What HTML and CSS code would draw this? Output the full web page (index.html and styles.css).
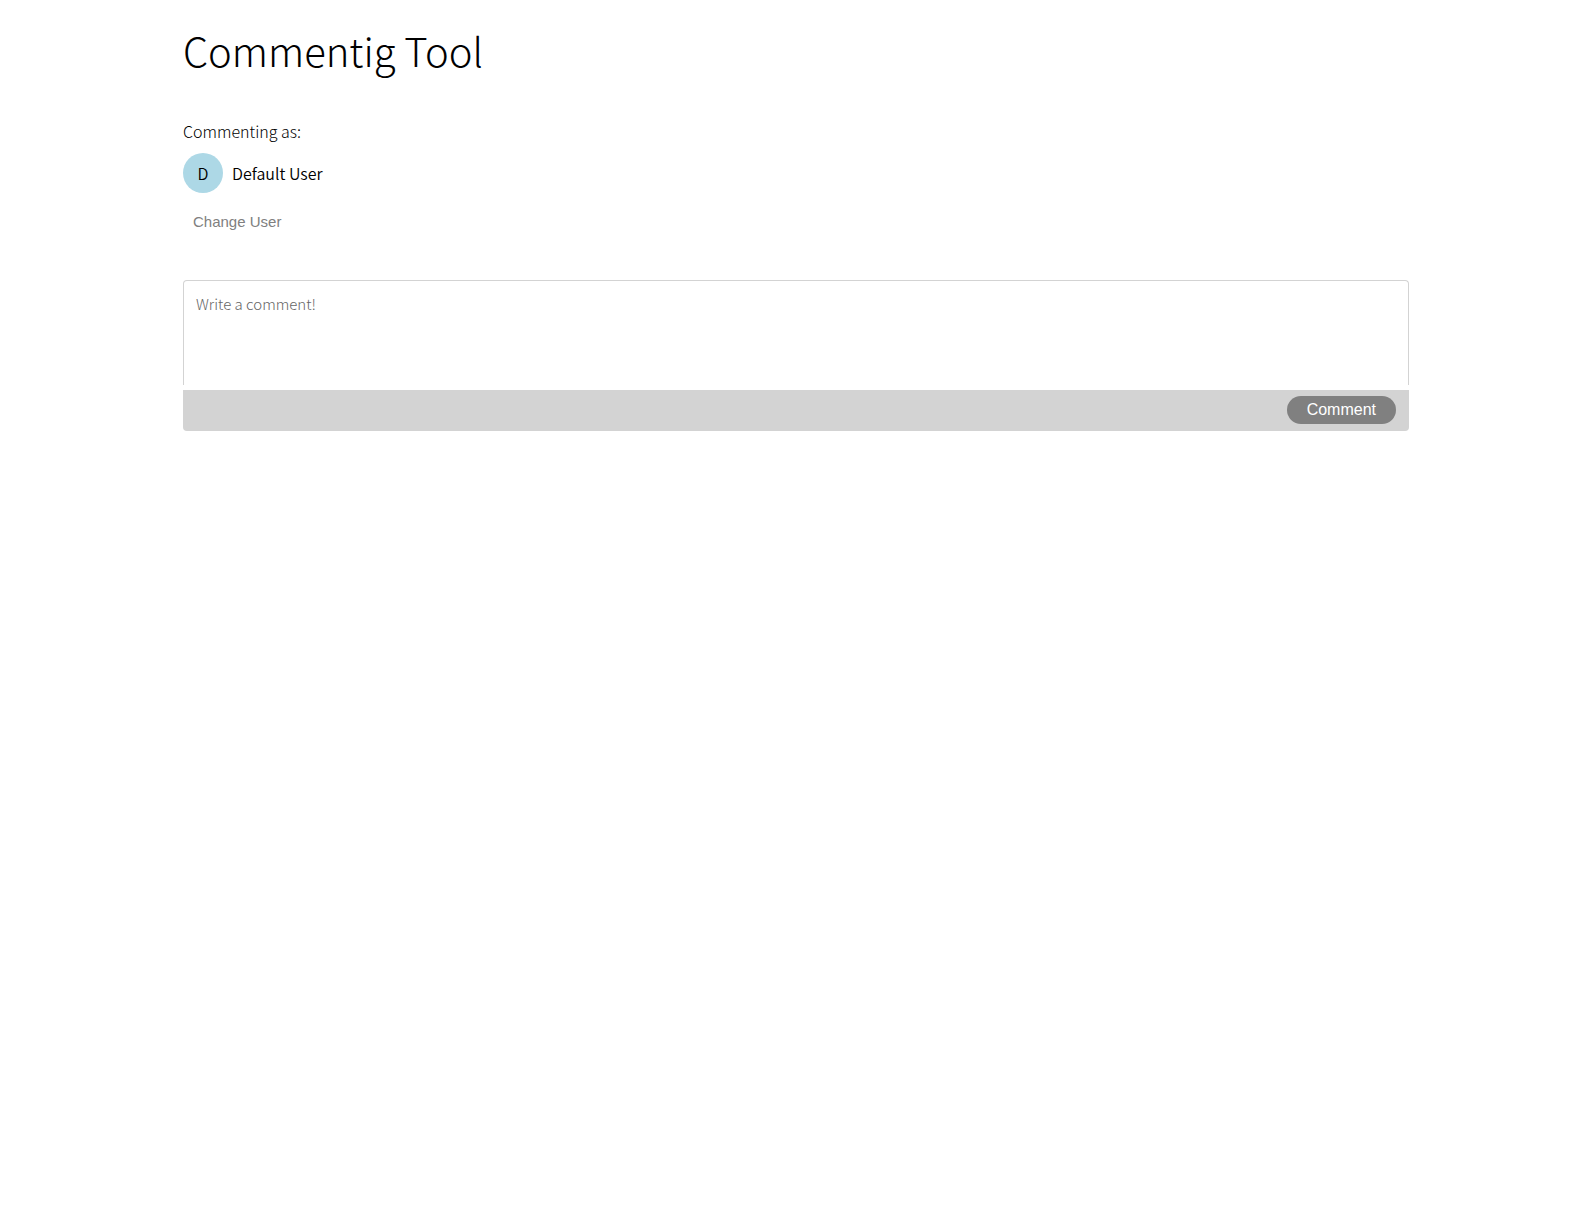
FILE: index.html
```
<!DOCTYPE html>
<html lang="en">
<head>
  <meta charset="utf-8">
  <meta name="viewport" content="width=device-width, initial-scale=1">
  <title>Commentig Tool</title>
  <link rel="stylesheet" href="styles.css">
</head>
<body>
  <main class="page">
    <h1 class="title">Commentig Tool</h1>
    <section class="account">
      <p class="account-label">Commenting as:</p>
      <div class="user">
        <span class="avatar">D</span>
        <span class="user-name">Default User</span>
      </div>
      <button class="change-user" type="button">Change User</button>
    </section>
    <form class="comment-form">
      <textarea class="comment-input" placeholder="Write a comment!" aria-label="Comment"></textarea>
      <div class="comment-bar">
        <button class="comment-submit" type="button">Comment</button>
      </div>
    </form>
  </main>
</body>
</html>
```
FILE: styles.css
```
* {
  box-sizing: border-box;
}

body {
  margin: 0;
  background: #fff;
  color: #000;
  font-family: "Source Sans Pro", "Noto Sans CJK SC", sans-serif;
  font-size: 16px;
  line-height: 24px;
}

.page {
  padding: 18px 184px 0 183px;
}

.title {
  margin: 0;
  font-size: 40px;
  font-weight: 300;
  line-height: 64px;
}

.account {
  display: flex;
  flex-direction: column;
  align-items: flex-start;
  margin-top: 37px;
}

.account-label {
  margin: 0 0 10px;
  font-weight: 300;
}

.user {
  display: flex;
  align-items: center;
  gap: 9px;
  font-family: "Source Sans Pro", "Noto Sans CJK SC DemiLight", "Noto Sans CJK SC", sans-serif;
  font-weight: 350;
}

.avatar {
  display: flex;
  align-items: center;
  justify-content: center;
  width: 40px;
  height: 40px;
  border-radius: 50%;
  background: lightblue;
}

.change-user {
  margin-top: 12px;
  padding: 8px 10px;
  border: 0;
  background: none;
  color: gray;
  font: 15px/18px "Liberation Sans", Arial, sans-serif;
}

.comment-form {
  margin-top: 41px;
}

.comment-input {
  display: block;
  width: 100%;
  height: 105px;
  padding: 12px;
  border: 1px solid lightgray;
  border-bottom: 0;
  border-radius: 4px 4px 0 0;
  outline: 0;
  resize: none;
  font: 300 15px/22px "Source Sans Pro", "Noto Sans CJK SC", sans-serif;
}

.comment-input::placeholder {
  color: #666;
}

.comment-bar {
  display: flex;
  align-items: flex-start;
  justify-content: flex-end;
  height: 41px;
  margin-top: 5px;
  padding: 6px 13px;
  border-radius: 0 0 4px 4px;
  background: lightgray;
}

.comment-submit {
  padding: 5px 20px;
  border: 0;
  border-radius: 14px;
  background: gray;
  color: #fff;
  font: 16px/18px "Liberation Sans", Arial, sans-serif;
}
```
